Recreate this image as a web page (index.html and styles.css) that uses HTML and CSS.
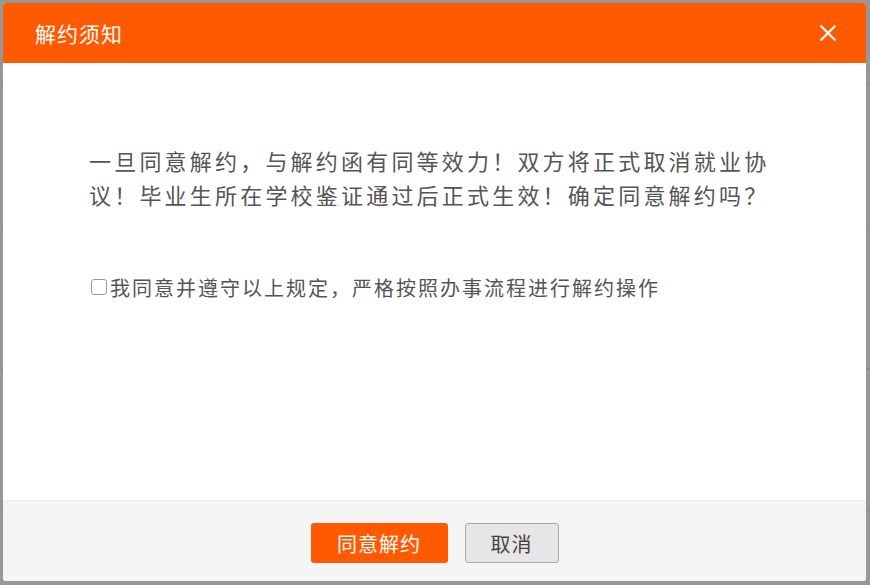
FILE: index.html
```html
<!DOCTYPE html>
<html lang="zh-CN">
<head>
<meta charset="utf-8">
<title>解约须知</title>
<link rel="stylesheet" href="styles.css">
</head>
<body>
<div class="backdrop">
  <div class="dialog">
    <div class="dialog-header">
      <span class="dialog-title">解约须知</span>
      <span class="dialog-close" aria-label="关闭">
        <svg width="18" height="18" viewBox="0 0 18 18"><path d="M1.5 1.5 L16.5 16.5 M16.5 1.5 L1.5 16.5" stroke="#fff" stroke-width="2.2" stroke-linecap="butt"/></svg>
      </span>
    </div>
    <div class="dialog-body">
      <p class="notice">一旦同意解约，与解约函有同等效力！双方将正式取消就业协议！毕业生所在学校鉴证通过后正式生效！确定同意解约吗？</p>
      <label class="agree"><span class="box"></span><span class="agree-text">我同意并遵守以上规定，严格按照办事流程进行解约操作</span></label>
    </div>
    <div class="dialog-footer">
      <button class="btn btn-primary">同意解约</button>
      <button class="btn btn-default">取消</button>
    </div>
  </div>
</div>
</body>
</html>
```
FILE: styles.css
```css
html, body {
  margin: 0;
  padding: 0;
}
body {
  width: 870px;
  height: 585px;
  overflow: hidden;
  font-family: "Noto Sans CJK SC", "Noto Sans", sans-serif;
  background-color: #979797;
  background-image: repeating-linear-gradient(to bottom, transparent 0, transparent 84px, #8a8a8a 84px, #8a8a8a 85px, transparent 85px, transparent 142px);
}
.backdrop {
  padding: 3px 4px 4px 3px;
}
.dialog {
  width: 863px;
  height: 578px;
  background: #fff;
  border-radius: 3px;
  display: flex;
  flex-direction: column;
  overflow: hidden;
}
.dialog-header {
  height: 60px;
  flex: none;
  background: #ff5a00;
  display: flex;
  align-items: center;
  justify-content: space-between;
  padding: 0 29px 0 32px;
}
.dialog-title {
  color: #fff;
  font-size: 21px;
  letter-spacing: 1px;
}
.dialog-close {
  display: flex;
  width: 18px;
  height: 18px;
}
.dialog-body {
  flex: 1;
  padding: 80px 86px 0 86px;
}
.notice {
  margin: 0;
  font-size: 22px;
  line-height: 34px;
  letter-spacing: 3.2px;
  color: #555;
}
.agree {
  margin-top: 61px;
  display: flex;
  align-items: center;
  height: 30px;
  font-size: 20px;
  color: #555;
  letter-spacing: 2px;
}
.box {
  width: 14px;
  height: 14px;
  border: 1px solid #999;
  border-radius: 3px;
  margin: 0 3px 0 2px;
  flex: none;
  background: #fff;
}
.dialog-footer {
  height: 81px;
  flex: none;
  box-sizing: border-box;
  background: #f5f5f5;
  border-top: 1px solid #ececec;
  display: flex;
  justify-content: center;
  align-items: flex-start;
  gap: 17px;
  padding-top: 22px;
}
.btn {
  font-family: "Noto Sans CJK SC", "Noto Sans", sans-serif;
  font-size: 20px;
  letter-spacing: 1px;
  height: 40px;
  border-radius: 3px;
  padding: 0;
  cursor: pointer;
}
.btn-primary {
  width: 137px;
  background: #ff5a00;
  color: #fff;
  border: none;
}
.btn-default {
  width: 94px;
  background: #e6e6e6;
  color: #444;
  border: 1px solid #a9a9a9;
}
```
